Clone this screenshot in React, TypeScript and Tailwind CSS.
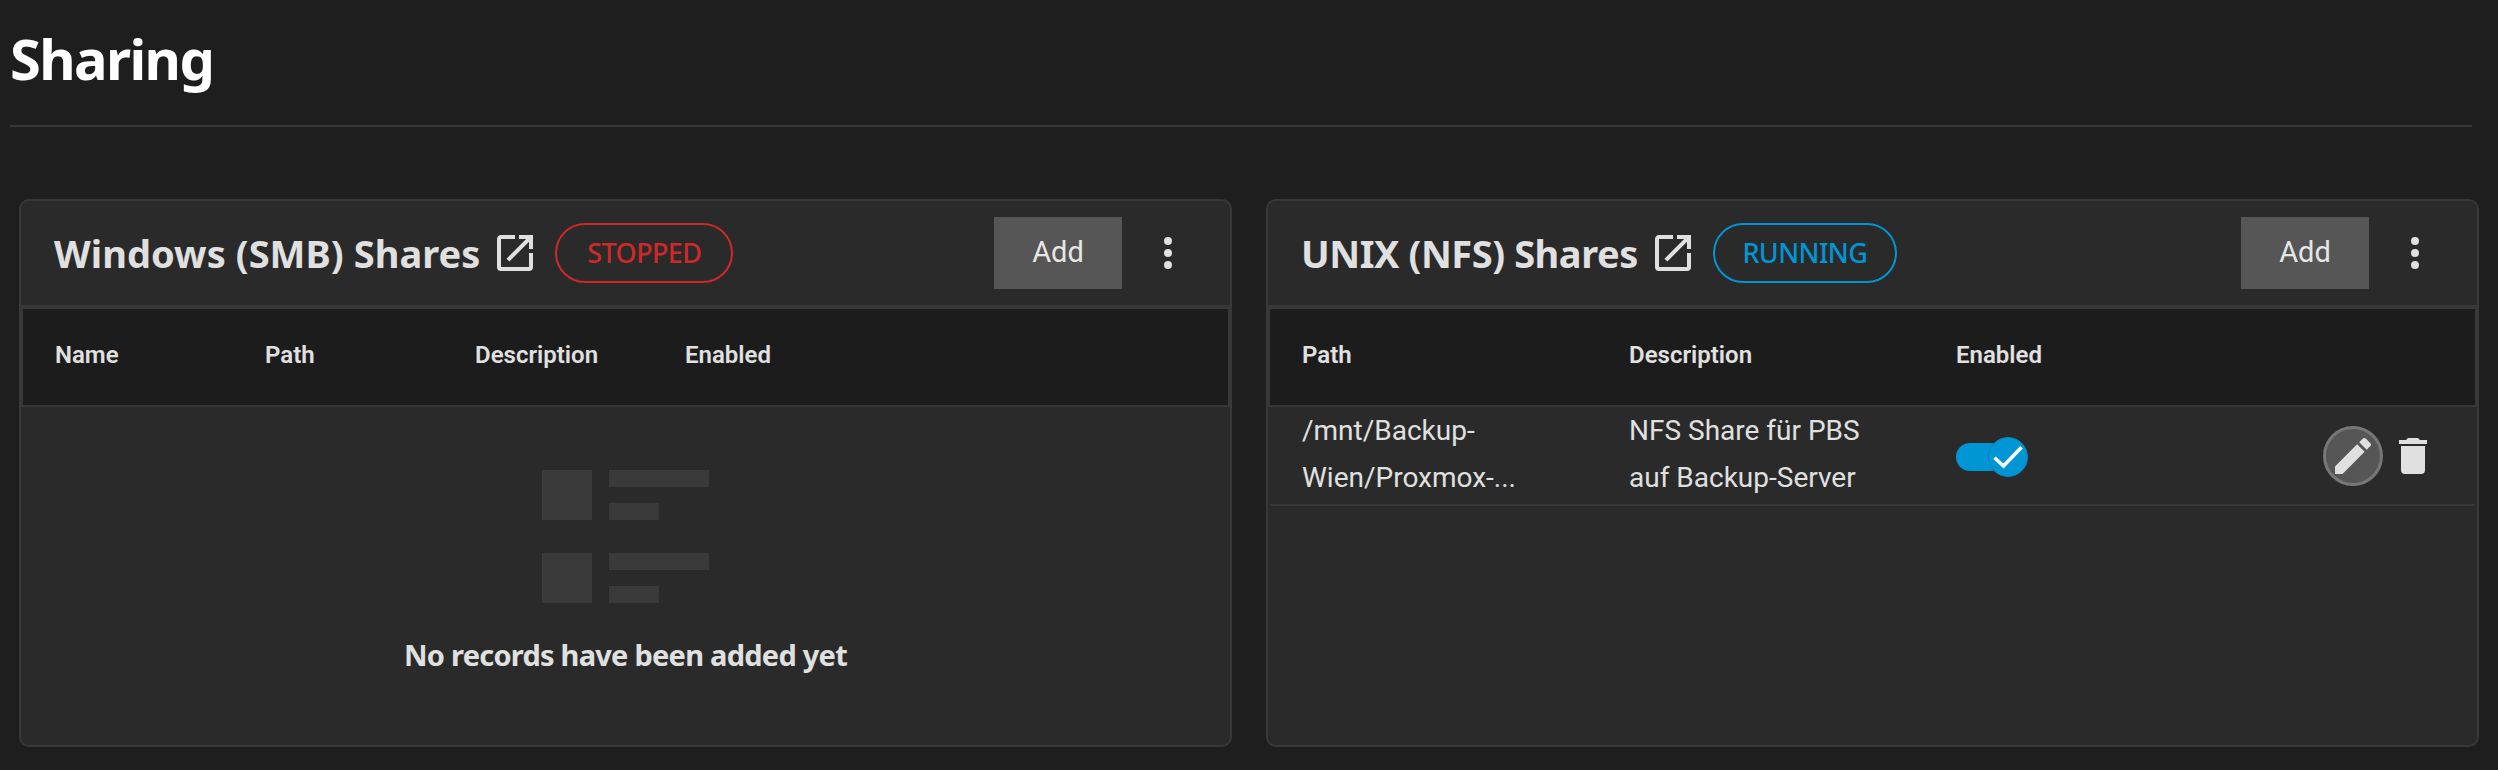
const titleFont = "font-['Noto_Sans',sans-serif]";
const bodyFont = "font-['Roboto',sans-serif]";

function MdiIcon({ d, className }: { d: string; className: string }) {
  return (
    <svg viewBox="0 0 24 24" className={className} fill="currentColor">
      <path d={d} />
    </svg>
  );
}

const OPEN = "M14,3V5H17.59L7.76,14.83L9.17,16.24L19,6.41V10H21V3M19,19H5V5H12V3H5C3.89,3 3,3.9 3,5V19A2,2 0 0,0 5,21H19A2,2 0 0,0 21,19V12H19V19Z";
const DOTS = "M12,16A2,2 0 0,1 14,18A2,2 0 0,1 12,20A2,2 0 0,1 10,18A2,2 0 0,1 12,16M12,10A2,2 0 0,1 14,12A2,2 0 0,1 12,14A2,2 0 0,1 10,12A2,2 0 0,1 12,10M12,4A2,2 0 0,1 14,6A2,2 0 0,1 12,8A2,2 0 0,1 10,6A2,2 0 0,1 12,4Z";
const PENCIL = "M20.71,7.04C21.1,6.65 21.1,6 20.71,5.63L18.37,3.29C18,2.9 17.35,2.9 16.96,3.29L15.12,5.12L18.87,8.87M3,17.25V21H6.75L17.81,9.93L14.06,6.18L3,17.25Z";
const TRASH = "M19,4H15.5L14.5,3H9.5L8.5,4H5V6H19V4M6,19A2,2 0 0,0 8,21H16A2,2 0 0,0 18,19V7H6V19Z";

function CardHeader({ title, status, pillClass, pillWidth, titleClass }: { title: string; status: string; pillClass: string; pillWidth: string; titleClass: string }) {
  return (
    <div className="h-[106px] border-b-2 border-[#383838] flex items-center pl-[33px] pr-[38px] text-[#e0e0e0]">
      <h2 className={`${titleFont} text-[38px] font-bold whitespace-nowrap leading-none ${titleClass}`}>{title}</h2>
      <MdiIcon d={OPEN} className="w-[48px] h-[48px] shrink-0 ml-[11px]" />
      <div className={`${titleFont} ${pillWidth} ${pillClass} h-[60px] ml-[16px] rounded-full border-2 flex items-center justify-center text-[27px] font-medium tracking-[-0.6px]`}>{status}</div>
      <button className={`${bodyFont} ml-auto w-[128px] h-[72px] bg-[#565656] text-[29px] text-[#e6e6e6]`}>Add</button>
      <MdiIcon d={DOTS} className="w-[48px] h-[48px] ml-[22px] shrink-0" />
    </div>
  );
}

function HeadRow({ cols, width }: { cols: string[]; width: string }) {
  return (
    <div className={`${bodyFont} h-[100px] border-2 border-[#383838] bg-[#1c1c1c] flex items-center pl-[32px] pb-[4px] text-[24px] font-semibold text-[#e0e0e0]`}>
      {cols.map((c) => (
        <div key={c} className={width}>{c}</div>
      ))}
    </div>
  );
}

function SmbCard() {
  return (
    <section className="w-[1213px] h-[548px] shrink-0 rounded-[10px] border-2 border-[#383838] bg-[#2a2a2a] overflow-hidden">
      <CardHeader title="Windows (SMB) Shares" status="STOPPED" pillClass="border-[#ce2929] text-[#ce2929]" pillWidth="w-[178px]" titleClass="tracking-[0.05px]" />
      <HeadRow cols={["Name", "Path", "Description", "Enabled"]} width="w-[210px]" />
      <div className="flex flex-col items-center pt-[63px]">
        <div className="flex flex-col gap-[33px]">
          {[0, 1].map((i) => (
            <div key={i} className="flex gap-[17px]">
              <div className="w-[50px] h-[50px] bg-[#3a3a3a]" />
              <div className="flex flex-col justify-between items-start">
                <div className="w-[100px] h-[17px] bg-[#3a3a3a]" />
                <div className="w-[50px] h-[17px] bg-[#3a3a3a]" />
              </div>
            </div>
          ))}
        </div>
        <div className={`${titleFont} mt-[32px] text-[29px] font-bold leading-[40px] tracking-[-0.75px] text-[#e0e0e0]`}>No records have been added yet</div>
      </div>
    </section>
  );
}

function NfsCard() {
  return (
    <section className="w-[1213px] h-[548px] shrink-0 rounded-[10px] border-2 border-[#383838] bg-[#2a2a2a] overflow-hidden">
      <CardHeader title="UNIX (NFS) Shares" status="RUNNING" pillClass="border-[#0095d5] text-[#0095d5]" pillWidth="w-[184px]" titleClass="tracking-[-0.45px]" />
      <HeadRow cols={["Path", "Description", "Enabled"]} width="w-[327px]" />
      <div className={`${bodyFont} h-[99px] mx-[2px] border-b-2 border-[#383838] flex items-center pl-[32px] text-[28px] leading-[47px] text-[#e0e0e0]`}>
        <div className="w-[327px] pb-[4px]">/mnt/Backup-<br />Wien/Proxmox-...</div>
        <div className="w-[327px] pb-[4px]">NFS Share für PBS<br />auf Backup-Server</div>
        <div className="relative w-[72px] h-[28px] mt-[3px] rounded-full mr-auto">
          <div className="w-[48px] h-[28px] rounded-full bg-[#0095d5]" />
          <div className="absolute left-[32px] top-[-6px] w-[40px] h-[40px] rounded-full bg-[#0095d5] border border-[#0a82b8] flex items-center justify-center">
            <svg viewBox="0 0 24 24" className="w-[36px] h-[36px] shrink-0" fill="none" stroke="#fff" strokeWidth="2.4">
              <path d="M3 12.5l6 5.5L21 5.5" />
            </svg>
          </div>
        </div>
        <div className="w-[60px] h-[60px] rounded-full bg-[#565656] border-[3px] border-[#777] flex items-center justify-center">
          <MdiIcon d={PENCIL} className="w-[48px] h-[48px] shrink-0" />
        </div>
        <MdiIcon d={TRASH} className="w-[48px] h-[48px] ml-[6px] mr-[38px] shrink-0" />
      </div>
    </section>
  );
}

export default function App() {
  return (
    <main className="w-[2498px] h-[770px] bg-[#1e1e1e] overflow-hidden">
      <header className="ml-[10px] mr-[26px] h-[125px] border-b-2 border-[#383838] box-content">
        <h1 className={`${titleFont} pt-[24px] text-[56px] leading-[68px] font-bold tracking-[-1.6px] text-white`}>Sharing</h1>
      </header>
      <div className="flex gap-[34px] pl-[19px] pt-[72px]">
        <SmbCard />
        <NfsCard />
      </div>
    </main>
  );
}
